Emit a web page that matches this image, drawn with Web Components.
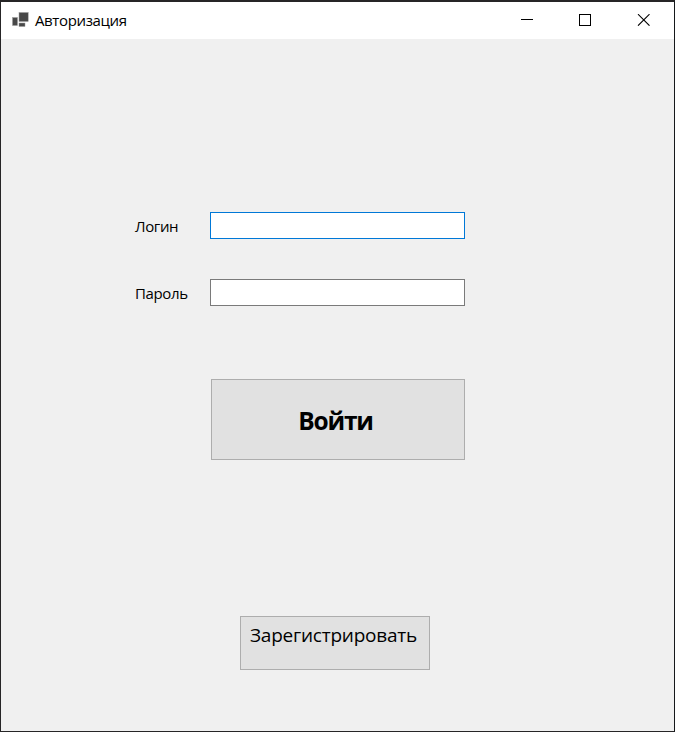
<!DOCTYPE html>
<html lang="ru">
<head>
<meta charset="utf-8">
<title>Авторизация</title>
<style>
html, body { margin: 0; height: 100%; overflow: hidden; }
body { font-family: "Open Sans", "Noto Sans", sans-serif; color: #000; }
field-row.login { --accent: #0078d7; }
push-button.enter { --w: 254px; --h: 81px; --size: 24.5px; --weight: 700; --ls: -1.2px; --pt: 24px; --pr: 5px; margin: 73px 0 0 210px; }
push-button.register { --w: 190px; --h: 54px; --size: 19px; --weight: 400; --ls: -.23px; --pt: 6px; --pr: 3px; margin: 156px 0 0 239px; }
</style>
</head>
<body>
<app-window>
  <title-bar slot="title">Авторизация</title-bar>
  <field-row class="login">Логин</field-row>
  <field-row>Пароль</field-row>
  <push-button class="enter">Войти</push-button>
  <push-button class="register">Зарегистрировать</push-button>
</app-window>
<script>
function define(name, html) {
  customElements.define(name, class extends HTMLElement {
    constructor() {
      super();
      this.attachShadow({ mode: 'open' }).innerHTML = html;
    }
  });
}

define('app-window', `
<style>
:host { display: flex; flex-direction: column; box-sizing: border-box; width: 675px; height: 732px;
  border: solid #262526; border-width: 2px 1px 1px; border-right-color: #15181a; background: #f0f0f0; }
main { display: flex; flex-direction: column; align-items: flex-start; gap: 0; padding-top: 173px; flex: 1; }
</style>
<slot name="title"></slot>
<main><slot></slot></main>`);

define('window-icon', `
<style>:host { display: block; width: 17px; height: 16px; } svg { display: block; }</style>
<svg width="17" height="16" viewBox="0 0 17 16">
  <g fill="#484848" stroke="#9b9b9b" stroke-width=".5">
    <rect x=".5" y="5.5" width="5" height="8"/>
    <rect x="7" y=".5" width="9.2" height="9"/>
    <rect x="7" y="11" width="6" height="3.5"/>
  </g>
</svg>`);

define('window-controls', `
<style>:host { display: flex; gap: 46px; } svg { display: block; }</style>
<svg width="12" height="12"><path d="M0 5.5H12" stroke="#000"/></svg>
<svg width="12" height="12"><rect x=".5" y=".5" width="11" height="11" fill="none" stroke="#000"/></svg>
<svg width="13" height="12" viewBox="0 0 13 12"><path d="M1 .2L12.5 11.7M12.5 .2L1 11.7" stroke="#000" stroke-width="1.1"/></svg>`);

define('title-bar', `
<style>
:host { display: flex; box-sizing: border-box; height: 37px; background: #fff; padding: 0 24px 0 11px; }
window-icon { margin-top: 10px; }
.title { flex: 1; margin: 8px 0 0 6px; font-size: 15px; letter-spacing: -.37px; line-height: 20px; white-space: nowrap; }
window-controls { margin-top: 12px; }
</style>
<window-icon></window-icon>
<span class="title"><slot></slot></span>
<window-controls></window-controls>`);

define('field-row', `
<style>
:host { display: flex; height: 27px; margin-bottom: 40px; padding-left: 134px; }
:host(:not(.login)) { margin-bottom: 0; }
label { width: 75px; font-size: 15px; letter-spacing: -.37px; line-height: 20px; padding-top: 4px; box-sizing: border-box; }
input { box-sizing: border-box; width: 255px; height: 27px; margin: 0; padding: 0 4px; border: 1px solid var(--accent, #7a7a7a); border-radius: 0; background: #fff; font: inherit; outline: none; }
</style>
<label><slot></slot></label><input type="text">`);

define('push-button', `
<style>
:host { display: block; }
button { display: flex; align-items: flex-start; justify-content: center; box-sizing: border-box; width: var(--w); height: var(--h);
  margin: 0; padding: var(--pt) var(--pr) 0 0; border: 1px solid #adadad; border-radius: 0; background: #e1e1e1; color: #000;
  font: var(--weight) var(--size)/1.36 "Open Sans", "Noto Sans", sans-serif; letter-spacing: var(--ls); white-space: nowrap; }
</style>
<button type="button"><slot></slot></button>`);
</script>
</body>
</html>
